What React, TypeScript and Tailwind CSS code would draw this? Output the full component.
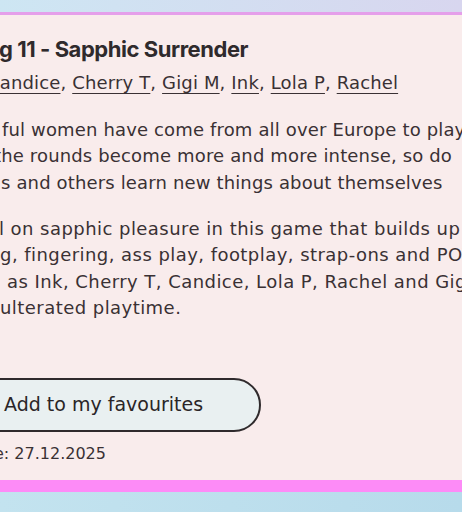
import React from 'react';

const body = "font-['DejaVu_Sans',sans-serif] text-[18px] leading-[26.5px] text-[#3a3134]";

const App: React.FC = () => {
  const models = ['Candice', 'Cherry T', 'Gigi M', 'Ink', 'Lola P', 'Rachel'];

  return (
    <div className="w-full h-[512px] overflow-hidden flex flex-col bg-gradient-to-r from-[#c3e3ef] to-[#b7dbeb]">
      {/* top strip */}
      <div className="h-[12px] shrink-0 bg-gradient-to-r from-[#cde6f3] to-[#d8d6ef]" />

      {/* card */}
      <div className="h-[480px] shrink-0 bg-[#f9ecec] border-t-[3px] border-t-[#e59fea] border-b-[12px] border-b-[#fd8bf7] overflow-hidden">
        <div className="pt-[20px] flex flex-col">
          <h2 className="whitespace-nowrap font-['Inter',sans-serif] font-bold text-[22px] leading-[28px] tracking-[-0.45px] text-[#2f2a2c] -ml-[1px]">
            g 11 - Sapphic Surrender
          </h2>

          <div className={`${body} tracking-[0.15px] mt-[7px] whitespace-nowrap -ml-[13px]`}>
            {models.map((m, i) => (
              <span key={m}>
                <a href="#" className="underline underline-offset-[4px] decoration-[1px]">{m}</a>
                {i < models.length - 1 && ', '}
              </span>
            ))}
          </div>

          <div className={`${body} tracking-[0.15px] mt-[20px] whitespace-nowrap`}>
            <div className="ml-[2px]">ful women have come from all over Europe to play</div>
            <div className="-ml-[6px]">the rounds become more and more intense, so do</div>
            <div className="ml-[1px]">s and others learn new things about themselves</div>
          </div>

          <div className={`${body} tracking-[0.45px] mt-[19.5px] whitespace-nowrap`}>
            <div className="-ml-[1px]">l on sapphic pleasure in this game that builds up</div>
            <div>g, fingering, ass play, footplay, strap-ons and POV</div>
            <div className="ml-[7px]">as Ink, Cherry T, Candice, Lola P, Rachel and Gigi</div>
            <div>ulterated playtime.</div>
          </div>

          <button className="mt-[56px] -ml-[40px] w-[301px] h-[54px] rounded-full border-2 border-[#2f2a2c] bg-[#e9f0f1] flex items-center pl-[42px] font-['DejaVu_Sans',sans-serif] text-[19px] text-[#2a2527] whitespace-nowrap">
            Add to my favourites
          </button>

          <div className="mt-[10px] -ml-[6px] whitespace-nowrap font-['DejaVu_Sans',sans-serif] text-[16px] leading-[24px] text-[#3a3134]">
            e: 27.12.2025
          </div>
        </div>
      </div>
    </div>
  );
};

export default App;
